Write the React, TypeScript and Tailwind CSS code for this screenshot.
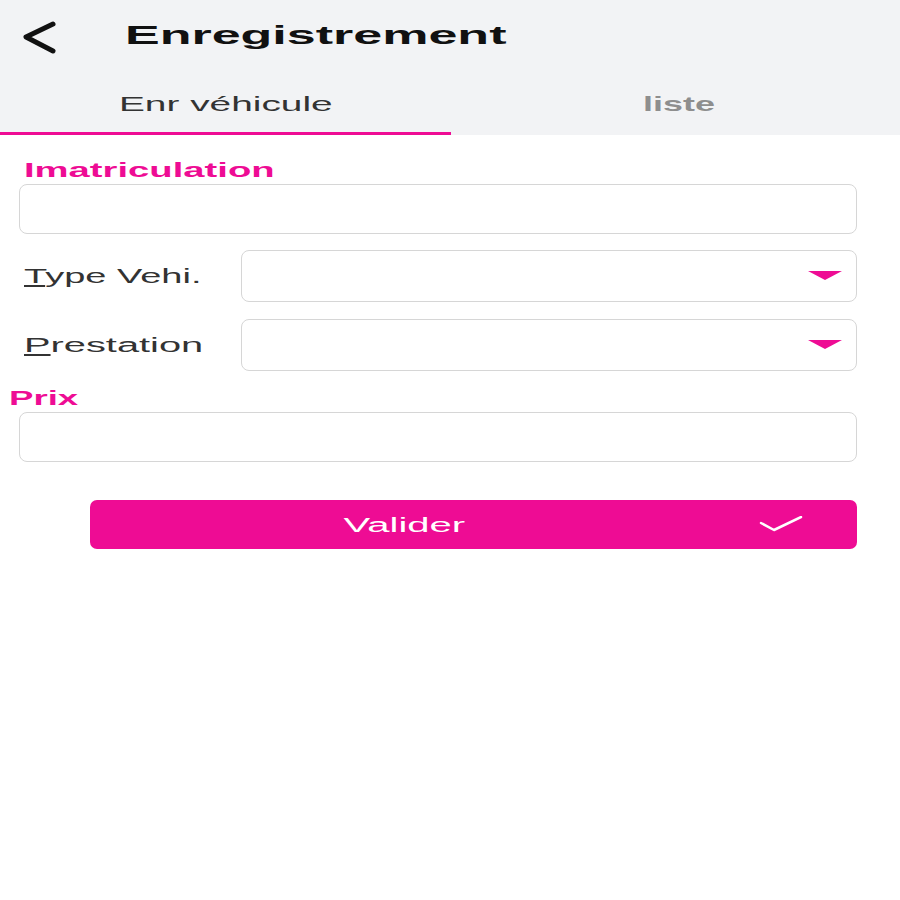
import React from "react";

const PINK = "#ee0c94";

function Caret() {
  return (
    <svg width="34" height="10" viewBox="0 0 34 10" className="mr-[14px]">
      <polygon points="0,0 34,0 17,9" fill={PINK} />
    </svg>
  );
}

export default function App() {
  return (
    <div
      className="w-[900px] h-[900px] bg-white overflow-hidden"
      style={{ fontFamily: '"Liberation Sans", Arial, sans-serif' }}
    >
      {/* Header */}
      <div className="bg-[#f2f3f5] h-[135px] flex flex-col">
        <div className="h-[70px] flex items-center">
          <svg width="36" height="36" viewBox="0 0 36 36" className="ml-[22px] mt-[4px]">
            <polyline
              points="31,5 4,18 31,32"
              fill="none"
              stroke="#111"
              strokeWidth="5"
              strokeLinecap="round"
              strokeLinejoin="round"
            />
          </svg>
          <span className="ml-[67px] inline-block text-[26px] font-bold text-[#111] origin-left scale-x-[2] leading-none">
            Enregistrement
          </span>
        </div>
        <div className="flex-1 flex">
          <div className="flex-1 flex flex-col">
            <div className="flex-1 flex items-center justify-center pt-[4px]">
              <span className="inline-block text-[21px] text-[#333] scale-x-[1.85] origin-center leading-none ml-[2px]">
                Enr véhicule
              </span>
            </div>
            <div className="h-[3px] bg-[#ee0c94] mr-[-1px]" />
          </div>
          <div className="flex-1 flex flex-col">
            <div className="flex-1 flex items-center justify-center pt-[4px]">
              <span className="inline-block text-[21px] font-bold text-[#8e8e8e] scale-x-[1.71] origin-center leading-none ml-[8px]">
                liste
              </span>
            </div>
            <div className="h-[3px]" />
          </div>
        </div>
      </div>

      {/* Form */}
      <div className="flex flex-col">
        <div className="mt-[23px] h-[24px] leading-[24px] pl-[24px]">
          <span className="inline-block text-[19.5px] font-bold text-[#ee0c94] scale-x-[1.96] origin-left">
            Imatriculation
          </span>
        </div>
        <div className="mt-[2px] ml-[19px] mr-[43px] h-[50px] rounded-[8px] border border-[#d6d6d6]" />

        <div className="mt-[16px] h-[52px] flex items-center">
          <div className="w-[241px] pl-[24px]">
            <span className="inline-block text-[20px] text-[#333] scale-x-[1.9] origin-left">
              <u className="underline-offset-2">T</u>ype Vehi.
            </span>
          </div>
          <div className="flex-1 mr-[43px] h-full rounded-[8px] border border-[#d6d6d6] flex items-center justify-end">
            <Caret />
          </div>
        </div>

        <div className="mt-[17px] h-[52px] flex items-center">
          <div className="w-[241px] pl-[24px]">
            <span className="inline-block text-[20px] text-[#333] scale-x-[1.99] origin-left">
              <u className="underline-offset-2">P</u>restation
            </span>
          </div>
          <div className="flex-1 mr-[43px] h-full rounded-[8px] border border-[#d6d6d6] flex items-center justify-end">
            <Caret />
          </div>
        </div>

        <div className="mt-[15px] h-[24px] leading-[24px] pl-[9px]">
          <span className="inline-block text-[20px] font-bold text-[#ee0c94] scale-x-[1.83] origin-left">
            Prix
          </span>
        </div>
        <div className="mt-[2px] ml-[19px] mr-[43px] h-[50px] rounded-[8px] border border-[#d6d6d6]" />

        <div className="mt-[38px] ml-[90px] mr-[43px] h-[49px] rounded-[7px] bg-[#ee0c94] flex items-center">
          <div className="flex-1 text-center pr-[40px]">
            <span className="inline-block text-[20px] text-white scale-x-[2] origin-center">
              Valider
            </span>
          </div>
          <svg width="44" height="18" viewBox="0 0 44 18" className="mr-[54px]">
            <polyline
              points="2,7 15,14 42,1"
              fill="none"
              stroke="white"
              strokeWidth="2.5"
              strokeLinecap="round"
              strokeLinejoin="round"
            />
          </svg>
        </div>
      </div>
    </div>
  );
}
